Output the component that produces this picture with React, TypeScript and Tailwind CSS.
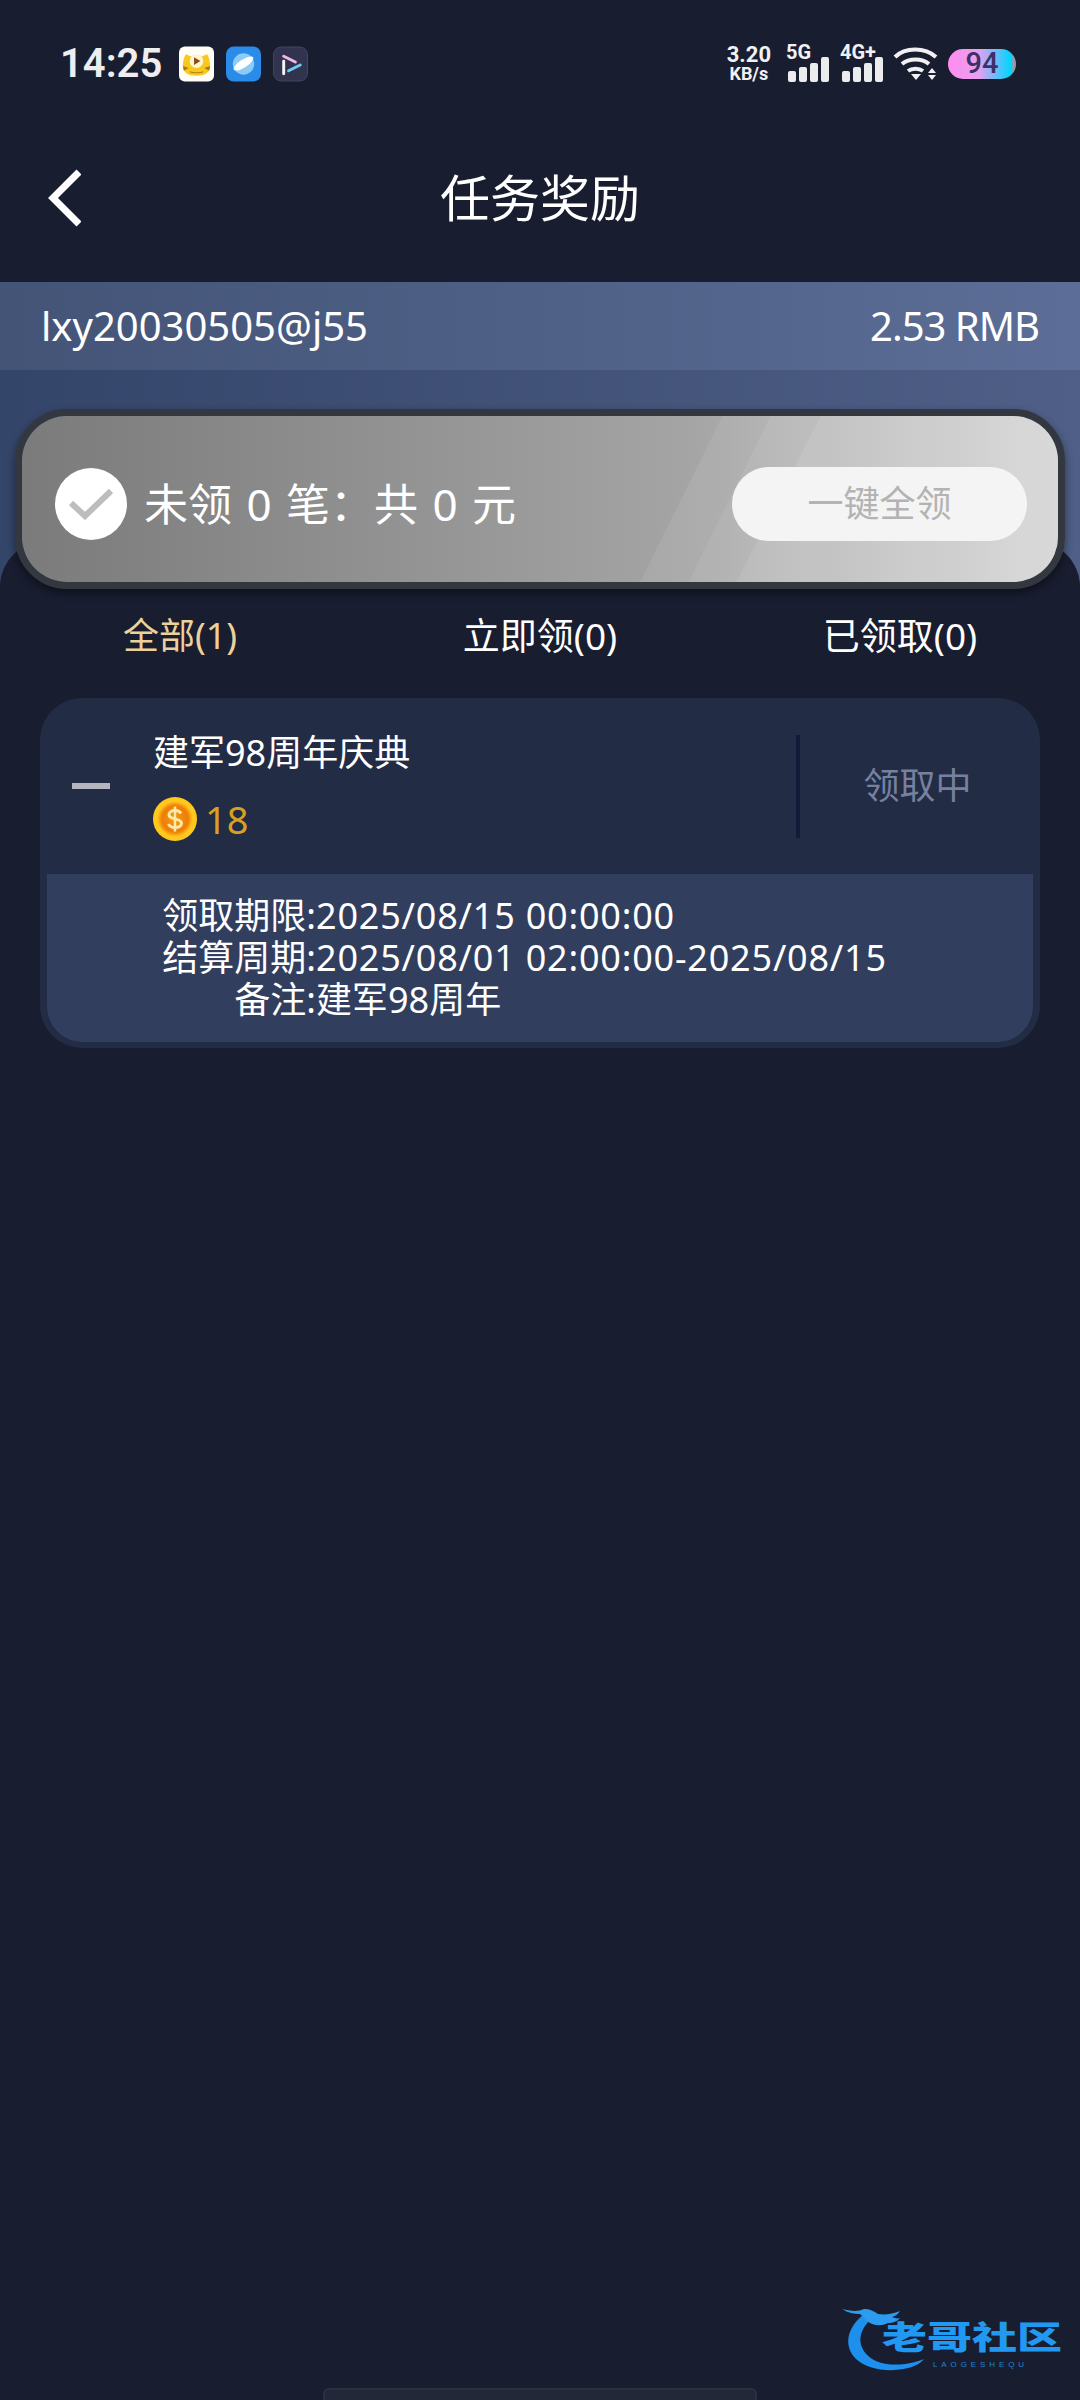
import * as React from "react";

/** Small app icons in the status bar */
function TigerIcon() {
  return (
    <svg viewBox="0 0 36 36" className="h-[36px] w-[35px]">
      <rect width="36" height="36" rx="6" fill="#fffdf5" />
      <path d="M4 20c0-4 1-9 3-12l5 2c4-1.500 8-1.500 12 0l5-2c2 3 3 8 3 12 0 7-6 10-14 10S4 27 4 20Z" fill="#f9c81e" />
      <path d="M4 20l6 2-5 3ZM32 20l-6 2 5 3Z" fill="#a8791a" />
      <path d="M11 26c4 1.500 10 1.500 14 0" stroke="#a8791a" strokeWidth="1" fill="none" />
      <circle cx="18" cy="15" r="7" fill="#fff6cf" />
      <path d="M15.500 11l6.500 4-6.500 4Z" fill="#8d4a1a" />
    </svg>
  );
}

function PlanetIcon() {
  return (
    <svg viewBox="0 0 36 36" className="h-[36px] w-[35px]">
      <rect width="36" height="36" rx="8" fill="#2a8be8" />
      <circle cx="18" cy="18" r="11" fill="#8ccaf7" />
      <path d="M8 24c-1-2 3-7 8-10s10-5 12-3c1 2-3 7-8 10s-10 5-12 3Z" fill="#fdfeff" />
    </svg>
  );
}

function PlayerIcon() {
  return (
    <svg viewBox="0 0 36 36" className="h-[36px] w-[35px]">
      <rect x="0.500" y="0.500" width="35" height="35" rx="8" fill="#32334f" stroke="#45465f" />
      <path d="M11 10l12 6" stroke="#f1b9e4" strokeWidth="3" strokeLinecap="round" />
      <path d="M11 15v13" stroke="#f5f5f8" strokeWidth="3" strokeLinecap="round" />
      <path d="M16 25l12-6" stroke="#6fcdf2" strokeWidth="3" strokeLinecap="round" />
    </svg>
  );
}

function SignalIcon({ label }: { label: string }) {
  return (
    <div className="relative h-[36px] w-[42px]">
      <span className="absolute left-0 top-[-4px] font-['Roboto',sans-serif] text-[20px] font-bold leading-[20px] text-[#f1f1f3]">
        {label}
      </span>
      <div className="absolute bottom-0 left-[2px] flex items-end gap-[3px]">
        <div className="h-[11px] w-[8px] rounded-[2px] bg-[#ececee]" />
        <div className="h-[15px] w-[8px] rounded-[2px] bg-[#ececee]" />
        <div className="h-[19px] w-[8px] rounded-[2px] bg-[#ececee]" />
        <div className="h-[25px] w-[8px] rounded-[2px] bg-[#ececee]" />
      </div>
    </div>
  );
}

function WifiIcon() {
  return (
    <svg viewBox="0 0 46 36" className="h-[36px] w-[46px]" fill="none" stroke="#f1f1f3" strokeWidth="4">
      <path d="M2 11C12 1 32 1 43 11" />
      <path d="M9 18c7-6 20-6 27 0" />
      <path d="M15 25c4-3 11-3 15 0" />
      <path d="M18 28h10l-5 6Z" fill="#f1f1f3" stroke="none" />
      <path d="M35 27l4-5 4 5ZM35 29l4 5 4-5Z" fill="#f1f1f3" stroke="none" />
    </svg>
  );
}

function CoinIcon() {
  return (
    <svg viewBox="0 0 44 44" className="h-[44px] w-[44px]">
      <defs>
        <radialGradient id="coinFill" cx="50%" cy="50%" r="50%">
          <stop offset="0%" stopColor="#f39a12" />
          <stop offset="75%" stopColor="#ee7d08" />
          <stop offset="100%" stopColor="#ffc21c" />
        </radialGradient>
      </defs>
      <circle cx="22" cy="22" r="22" fill="#ffc81e" />
      <circle cx="22" cy="22" r="17.500" fill="url(#coinFill)" />
      <path d="M28 16.500c-1-2-3.500-3-6-3-3.500 0-6 1.700-6 4.300 0 5.700 12.500 3 12.500 8.500 0 2.700-3 4.200-6.500 4.200-3 0-5.500-1.200-6.500-3.500" fill="none" stroke="#ffe9a8" strokeWidth="3" />
      <path d="M22 9.500v25" stroke="#ffe9a8" strokeWidth="2.500" />
    </svg>
  );
}

function Watermark() {
  return (
    <div className="absolute left-[842px] top-[2303px] h-[76px] w-[222px]">
      <svg viewBox="0 0 100 76" className="absolute left-0 top-0 h-[76px] w-[100px]" fill="none">
        <path d="M24 10C6 22 0 42 14 56c11 10 32 14 52 9 6-1.500 12-4 16-9-14 6-34 8-48 2C18 50 12 34 27 18Z" fill="#1d8fec" />
        <path d="M0 6c8 2 16 3 22 0 6 0 10 2 14 5 8 1 14 0 22-3-2 3-4 5-8 6 3 1 5 2 8 1-3 4-8 5-12 5-6 3-12 3-18 0-4-2-6-6-10-9C12 11 6 10 0 6Z" fill="#2c9cf0" />
      </svg>
      <span className="absolute left-[40px] top-[16px] h-[36px] origin-top scale-y-[0.72] whitespace-nowrap text-[45px] font-black leading-[48px] text-[#2198f2]">老哥社区</span>
      <span className="absolute left-[91px] top-[57px] whitespace-nowrap font-['Liberation_Sans',sans-serif] text-[8px] leading-[9px] tracking-[3.900px] text-[#1f86dc]">LAOGESHEQU</span>
    </div>
  );
}

export default function App() {
  return (
    <div className="relative flex h-[2400px] w-[1080px] flex-col overflow-hidden bg-[#191d30] font-['Noto_Sans','Noto_Sans_CJK_SC',sans-serif] text-white">
      {/* status bar */}
      <div className="mt-[46px] flex h-[36px] items-center justify-between pl-[60px] pr-[64px]">
        <div className="flex items-center gap-[12px]">
          <span className="mr-[5px] font-['Roboto',sans-serif] text-[40px] font-semibold leading-[36px] text-[#eeeef0]">14:25</span>
          <TigerIcon />
          <PlanetIcon />
          <PlayerIcon />
        </div>
        <div className="flex items-center">
          <div className="mr-[15px] flex flex-col items-center font-['Roboto',sans-serif] font-bold text-[#f1f1f3]">
            <span className="text-[22px] leading-[20px]">3.20</span>
            <span className="text-[18px] leading-[18px]">KB/s</span>
          </div>
          <SignalIcon label="5G" />
          <div className="w-[12px]" />
          <SignalIcon label="4G+" />
          <div className="w-[11px]" />
          <WifiIcon />
          <div className="ml-[9px] flex h-[30px] w-[68px] items-center justify-center rounded-full bg-[linear-gradient(90deg,#ff8cf0_0%,#e7a0ee_45%,#00d6ff_92%,#9a9aa0_96%)] font-['Roboto',sans-serif] text-[29px] font-medium text-[#3f2f69]">
            94
          </div>
        </div>
      </div>

      {/* title */}
      <div className="relative flex h-[200px] items-center justify-center pt-[32px]">
        <svg viewBox="0 0 34 58" className="absolute left-[47px] top-[87px] h-[58px] w-[34px]" fill="none" stroke="#ffffff" strokeWidth="7">
          <path d="M32 3 6 29l26 26" />
        </svg>
        <h1 className="text-[50px] font-normal leading-none">任务奖励</h1>
      </div>

      {/* account row */}
      <div className="flex h-[88px] items-center justify-between bg-[linear-gradient(90deg,#435477,#5c6d97)] px-[41px] text-[40px] leading-[56px]">
        <span>lxy20030505@j55</span>
        <span className="tracking-[-1px]">2.53 RMB</span>
      </div>

      {/* claim card */}
      <div className="relative bg-[linear-gradient(90deg,#34456a,#4f5f87)] px-[15px] pt-[39px]">
        <div className="absolute inset-x-0 top-[171px] h-[48px] rounded-t-[46px] bg-[#191d30]" />
        <div className="relative h-[180px] overflow-hidden rounded-[52px] border-[7px] border-[#33373f] shadow-[0_4px_8px_rgba(0,0,0,0.45)]">
          <div className="flex h-full items-center justify-between bg-[linear-gradient(90deg,#7b7b7b_0%,#a5a5a5_65%,#d0d0d0_100%)] pl-[33px] pr-[31px] pt-[9px]">
            <svg viewBox="0 0 1034 170" preserveAspectRatio="none" className="absolute inset-0 h-full w-full">
              <path d="M617 170 699 0H1034V170Z" fill="#ffffff" fillOpacity="0.08" />
              <path d="M665 170 747 0H1034V170Z" fill="#ffffff" fillOpacity="0.07" />
              <path d="M713 170 797 0H1034V170Z" fill="#ffffff" fillOpacity="0.09" />
            </svg>
            <div className="relative flex items-center gap-[17px]">
              <div className="flex h-[72px] w-[72px] items-center justify-center rounded-full bg-white">
                <svg viewBox="0 0 44 32" className="h-[32px] w-[44px]" fill="none" stroke="#bdbdbd" strokeWidth="6">
                  <path d="M2 15l14 13L42 3" />
                </svg>
              </div>
              <span className="whitespace-pre text-[44px] leading-[60px] [word-spacing:3px]">未领 0 笔：共 0 元</span>
            </div>
            <div className="relative flex h-[74px] w-[295px] items-center justify-center rounded-[37px] bg-[#f4f4f4] text-[36px] text-[#b3b3b3]">
              一键全领
            </div>
          </div>
        </div>
      </div>

      {/* tabs */}
      <div className="relative grid h-[94px] grid-cols-3 items-center text-center text-[37px] leading-[48px]">
        <span className="text-[36px] text-[#ecd19b]">全部(1)</span>
        <span>立即领(0)</span>
        <span>已领取(0)</span>
      </div>

      {/* reward item */}
      <div className="relative mx-[40px] mt-[15px] overflow-hidden rounded-[42px] border-x-[7px] border-b-[6px] border-[#232c45] bg-[#232c45]">
        <div className="flex h-[176px] items-center">
          <div className="ml-[25px] h-[6px] w-[38px] bg-[#b4b6bf]" />
          <div className="ml-[43px] flex flex-1 flex-col">
            <span className="text-[36px] leading-[44px]">建军98周年庆典</span>
            <div className="mt-[22px] flex items-center gap-[8px]">
              <CoinIcon />
              <span className="text-[38px] leading-[44px] text-[#d9a021]">18</span>
            </div>
          </div>
          <div className="h-[103px] w-[4px] bg-[#141b38]" />
          <div className="flex w-[233px] items-center justify-center pl-[2px] text-[36px] leading-[44px] text-[#76819f]">领取中</div>
        </div>
        <div className="grid h-[168px] grid-cols-[269px_1fr] content-start bg-[#323e5e] pt-[21px] text-[36px] leading-[42px]">
          <span className="text-right">领取期限:</span>
          <span className="tracking-[0.800px]">2025/08/15 00:00:00</span>
          <span className="text-right">结算周期:</span>
          <span className="tracking-[0.800px]">2025/08/01 02:00:00-2025/08/15</span>
          <span className="text-right">备注:</span>
          <span>建军98周年</span>
        </div>
      </div>

      <Watermark />

      {/* gesture bar */}
      <div className="mx-auto mt-auto h-[12px] w-[434px] rounded-t-[6px] border-x-[2px] border-t-[2px] border-[#2a2f42] bg-[#232838]" />
    </div>
  );
}
